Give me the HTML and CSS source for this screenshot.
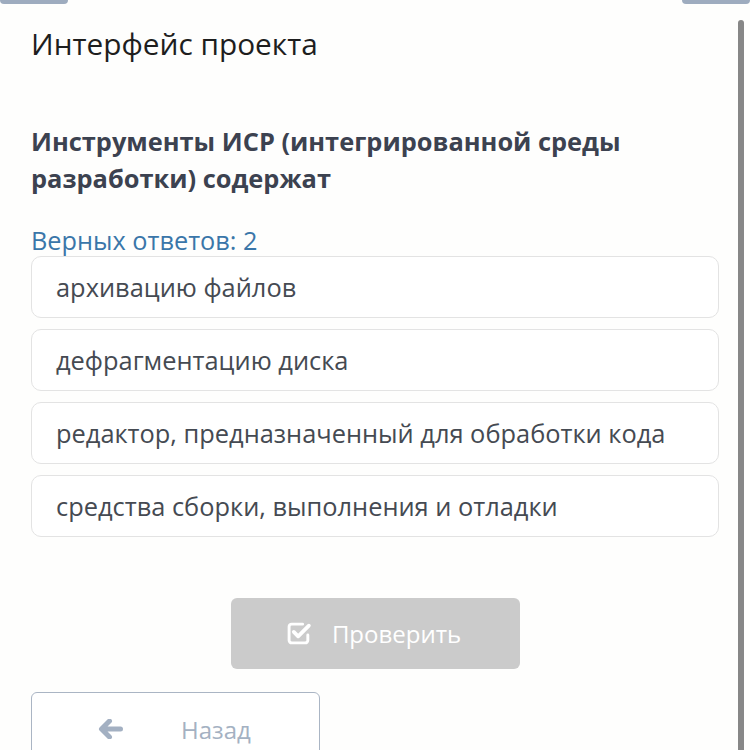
FILE: index.html
```html
<!DOCTYPE html>
<html lang="ru">
<head>
<meta charset="utf-8">
<link rel="stylesheet" href="styles.css">
</head>
<body>
<div class="tabs"><span class="tab"></span><span class="tab"></span></div>
<div class="scrollbar"></div>
<main class="page">
  <h1 class="title">Интерфейс проекта</h1>
  <h2 class="question">Инструменты ИСР (интегрированной среды разработки) содержат</h2>
  <div class="hint">Верных ответов: 2</div>
  <ul class="options">
    <li class="option">архивацию файлов</li>
    <li class="option">дефрагментацию диска</li>
    <li class="option">редактор, предназначенный для обработки кода</li>
    <li class="option">средства сборки, выполнения и отладки</li>
  </ul>
  <div class="check-row">
    <button class="check-btn">
      <svg class="check-ico" viewBox="0 0 24 24" width="25" height="25">
        <path d="M20 13.5v5a2.5 2.5 0 0 1-2.5 2.5H4.5A2.5 2.5 0 0 1 2 18.5V5.5A2.5 2.5 0 0 1 4.5 3H15" fill="none" stroke="#fff" stroke-width="2.8" stroke-linecap="round"/>
        <path d="M6.5 10.5l4.2 4.2L21 4.5" fill="none" stroke="#fff" stroke-width="3.6" stroke-linecap="round" stroke-linejoin="round"/>
      </svg>
      <span>Проверить</span>
    </button>
  </div>
  <button class="back-btn">
    <svg class="back-ico" viewBox="0 0 24 20" width="25" height="20">
      <path d="M11 2L3 10l8 8M3.5 10H22" fill="none" stroke="#a3b0c2" stroke-width="5" stroke-linecap="round" stroke-linejoin="round"/>
    </svg>
    <span>Назад</span>
  </button>
</main>
</body>
</html>
```
FILE: styles.css
```css
html, body {
  margin: 0;
  padding: 0;
  background: #fefefd;
  overflow: hidden;
  height: 750px;
}
body {
  font-family: "Open Sans", "Noto Sans", sans-serif;
  position: relative;
  color: #444;
}
.tabs {
  display: flex;
  justify-content: space-between;
  height: 4px;
}
.tab {
  width: 68px;
  height: 4px;
  background: #9eacbf;
  border-radius: 0 0 6px 6px;
}
.scrollbar {
  position: absolute;
  left: 738px;
  top: 20px;
  width: 6px;
  height: 740px;
  background: #878787;
  border-radius: 3px 3px 0 0;
}
.page {
  padding: 0 31px;
  width: 688px;
}
.title {
  margin: 21px 0 0;
  font-size: 29.8px;
  font-weight: 400;
  line-height: 38px;
  color: #1e1e1e;
}
.question {
  margin: 60px 0 0;
  font-size: 25.4px;
  font-weight: 700;
  line-height: 37px;
  color: #3c4250;
}
.hint {
  margin-top: 27px;
  font-size: 25.3px;
  line-height: 32px;
  color: #3a76a9;
}
.options {
  list-style: none;
  margin: 0;
  padding: 0;
  display: flex;
  flex-direction: column;
  gap: 11px;
}
.option {
  height: 60px;
  border: 1px solid #e3e3e3;
  border-radius: 10px;
  background: #fff;
  padding: 0 24px;
  display: flex;
  align-items: center;
  font-size: 25.4px;
  color: #454a52;
}
.check-row {
  display: flex;
  justify-content: center;
  margin-top: 61px;
}
.check-btn {
  width: 289px;
  height: 71px;
  border: none;
  border-radius: 6px;
  background: #cbcbcb;
  color: #fff;
  font-family: inherit;
  font-size: 24px;
  display: flex;
  align-items: center;
  justify-content: center;
  gap: 20px;
  padding: 0 2px 0 0;
}
.check-ico {
  flex: none;
}
.back-btn {
  margin-top: 23px;
  width: 289px;
  height: 74px;
  border: 1px solid #aab5c4;
  border-radius: 6px;
  background: #fff;
  color: #a4b1c2;
  font-family: inherit;
  font-size: 24px;
  display: flex;
  align-items: center;
  gap: 58px;
  padding: 0 0 0 66px;
}
```
